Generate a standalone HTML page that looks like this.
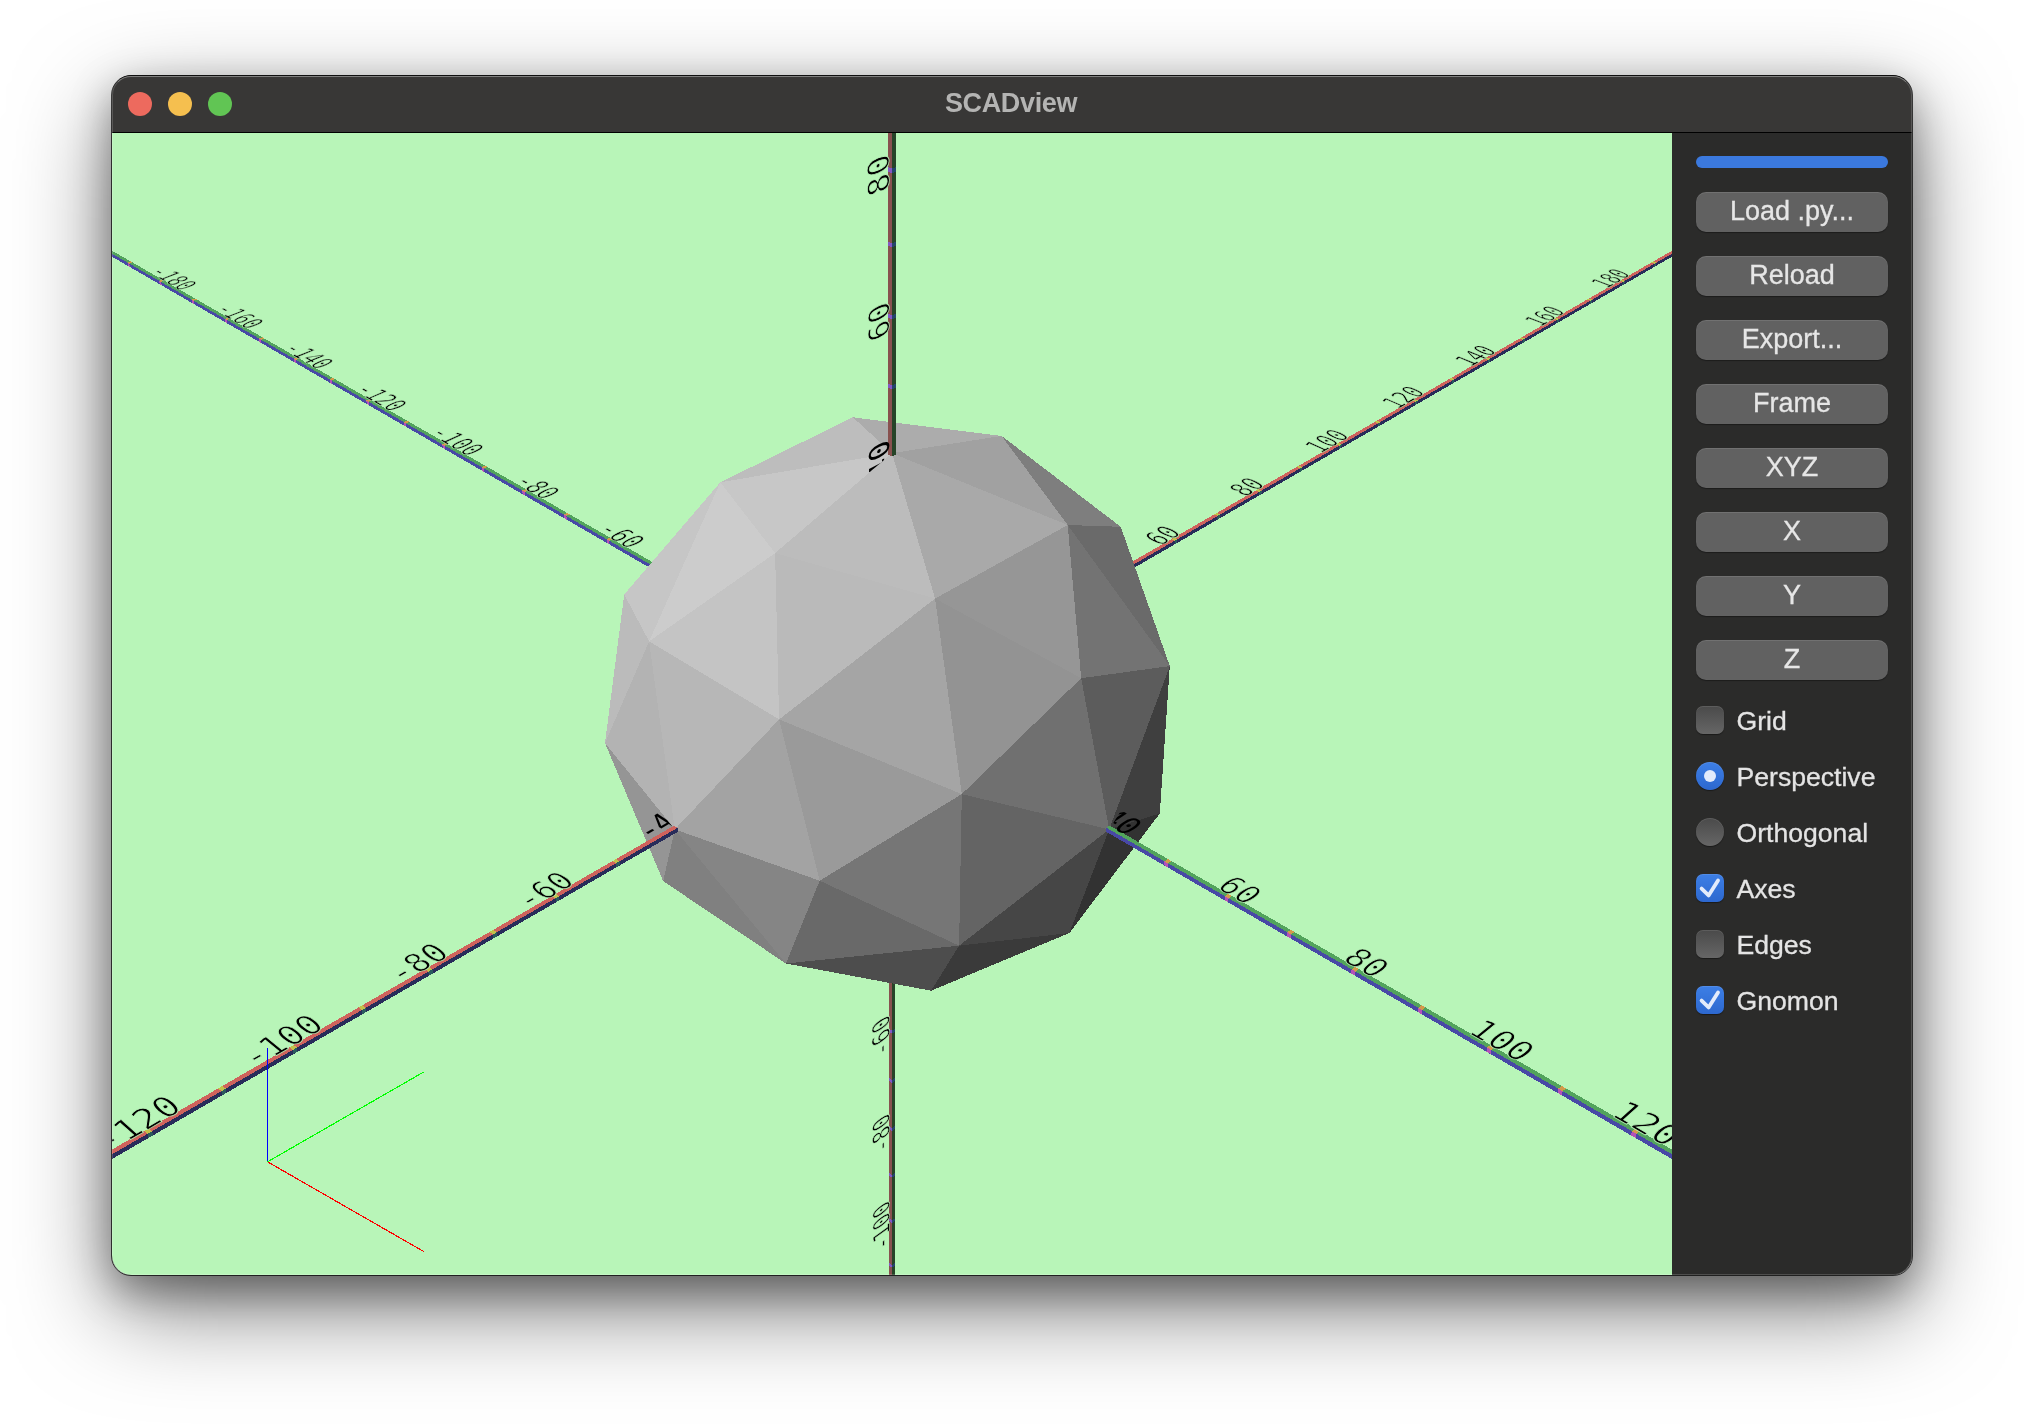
<!DOCTYPE html>
<html lang="en">
<head>
<meta charset="utf-8">
<title>SCADview</title>
<style>
html,body{margin:0;padding:0;background:#fff;}
body{width:2024px;height:1424px;position:relative;overflow:hidden;font-family:"Liberation Sans",sans-serif;}
.shadow{position:absolute;left:112px;top:75px;width:1800px;height:1200px;border-radius:20px;
  box-shadow:0 34px 96px 0 rgba(0,0,0,0.50),0 16px 40px 0 rgba(0,0,0,0.36);}
.win{position:absolute;left:112px;top:75px;width:1800px;height:1200px;border-radius:20px;overflow:hidden;background:#2b2b2a;}
.edge{position:absolute;left:111px;top:75px;width:1800px;height:1199px;border-radius:20px;border:1px solid rgba(0,0,0,0.72);pointer-events:none;}
.hl{position:absolute;left:112px;top:76px;width:1798px;height:1197px;border-radius:19px;border:1px solid rgba(255,255,255,0.17);border-top-color:rgba(255,255,255,0.36);pointer-events:none;}
.titlebar{position:absolute;left:0;top:0;width:1800px;height:57px;background:#383736;}
.tsep{position:absolute;left:0;top:57px;width:1800px;height:1px;background:#000;}
.title{will-change:transform;position:absolute;left:-1.5px;top:0;width:1800px;height:57px;line-height:56px;text-align:center;color:#b4b4b3;font-weight:bold;font-size:27px;letter-spacing:-0.35px;}
.tl{position:absolute;top:17px;width:24px;height:24px;border-radius:50%;}
.gl{position:absolute;left:0;top:58px;display:block;will-change:transform;}
.lab text{font-family:"DejaVu Sans Mono","Liberation Mono",monospace;font-size:100px;fill:#000;}
.lab.thin text{stroke:#b8f5b8;stroke-width:2.4px;paint-order:fill stroke;}
.side{will-change:transform;position:absolute;left:1560px;top:58px;width:240px;height:1142px;background:#2b2b2a;}
.prog{position:absolute;left:24px;top:23px;width:192px;height:12px;border-radius:6px;background:#3b79de;}
.btn{position:absolute;left:24px;width:192px;height:40px;border-radius:10px;background:#616161;color:#e6e6e6;-webkit-text-stroke:0.3px #e6e6e6;font-size:27px;line-height:38px;text-align:center;
  box-shadow:0 1px 1px rgba(0,0,0,0.35), inset 0 1px 0 rgba(255,255,255,0.10);}
.opt{position:absolute;left:24px;height:28px;color:#e4e4e4;-webkit-text-stroke:0.3px #e4e4e4;font-size:26.6px;line-height:28px;white-space:nowrap;}
.opt span{position:absolute;left:40.5px;top:1px;}
.cb{position:absolute;left:0;top:0;width:28px;height:28px;border-radius:7px;background:linear-gradient(#4a4a4a,#666);box-shadow:0 1px 1px rgba(0,0,0,0.4), inset 0 1px 0 rgba(255,255,255,0.10);}
.cb.on{background:linear-gradient(#3d7fe6,#2d68cf);}
.rb{position:absolute;left:0;top:0;width:28px;height:28px;border-radius:50%;background:linear-gradient(#4a4a4a,#666);box-shadow:0 1px 1px rgba(0,0,0,0.4), inset 0 1px 0 rgba(255,255,255,0.10);}
.rb.on{background:linear-gradient(#3d7fe6,#2d68cf);}
.rb.on i{position:absolute;left:8px;top:8px;width:12px;height:12px;border-radius:50%;background:#e3ebfb;}
.cb svg{position:absolute;left:0;top:0;}
</style>
</head>
<body>
<div class="shadow"></div>
<div class="win">
  <div class="titlebar"></div>
  <div class="tsep"></div>
  <div class="tl" style="left:16px;background:#ed6a5e"></div>
  <div class="tl" style="left:56px;background:#f5bf4f"></div>
  <div class="tl" style="left:96px;background:#61c554"></div>
  <div class="title">SCADview</div>
<svg class="gl" width="1560" height="1142" viewBox="0 0 1560 1142">
<defs><clipPath id="cxy"><path clip-rule="evenodd" d="M-10,-10H1570V1152H-10Z M516.9,535.1 L493.0,610.1 L562.8,696.4 L707.7,747.7 L848.4,738.4 L997.2,696.4 L1052.7,608.2 L1056.4,533.3 L973.4,459.4 L841.6,420.4 L721.2,427.3 L586.6,459.4Z"/></clipPath><clipPath id="cz"><path clip-rule="evenodd" d="M-10,-10H1570V1152H-10Z M611.4,788.6 L674.4,829.2 L780.0,794.3 L879.6,699.6 L933.8,592.0 L973.4,459.4 L942.6,361.1 L889.6,302.9 L780.0,320.2 L663.1,420.1 L600.8,546.6 L562.8,696.4Z"/></clipPath></defs>
<rect width="1560" height="1142" fill="#b8f5b8"/>
<g shape-rendering="crispEdges"><polygon points="-555.6,-197.7 -556.4,-200.6 778.3,570.0 778.3,573.9" fill="#4848a6"/><polygon points="-556.4,-200.6 -553.5,-201.3 781.7,568.1 778.3,570.0" fill="#52a35c"/><polygon points="781.7,573.9 781.7,570.0 2116.4,-200.6 2115.6,-197.7" fill="#282c5a"/><polygon points="778.3,568.1 781.7,570.0 2116.4,-200.6 2113.5,-201.3" fill="#cf625c"/><polygon points="777.9,2112.0 780.0,2114.1 780.0,573.0 776.6,571.0" fill="#88514f"/><polygon points="780.0,2114.1 782.1,2112.0 783.4,571.0 780.0,573.0" fill="#264428"/><polygon points="538.4,431.5 541.8,429.8 544.5,431.4 541.1,433.1" fill="#d39a4a"/><polygon points="494.6,406.2 497.9,404.6 500.5,406.1 497.2,407.7" fill="#d39a4a"/><polygon points="451.9,381.6 455.2,380.0 457.8,381.4 454.4,383.0" fill="#d39a4a"/><polygon points="410.3,357.6 413.6,356.0 416.1,357.4 412.8,359.0" fill="#d39a4a"/><polygon points="369.8,334.2 373.1,332.6 375.5,334.0 372.2,335.6" fill="#d39a4a"/><polygon points="330.3,311.4 333.6,309.9 336.0,311.2 332.6,312.7" fill="#d39a4a"/><polygon points="291.8,289.1 295.1,287.7 297.4,289.0 294.1,290.5" fill="#d39a4a"/><polygon points="254.3,267.5 257.6,266.1 259.8,267.3 256.5,268.8" fill="#d39a4a"/><polygon points="217.6,246.3 220.9,244.9 223.1,246.2 219.8,247.6" fill="#d39a4a"/><polygon points="181.9,225.7 185.2,224.3 187.3,225.6 184.0,226.9" fill="#d39a4a"/><polygon points="147.0,205.5 150.3,204.2 152.4,205.4 149.1,206.7" fill="#d39a4a"/><polygon points="113.0,185.9 116.2,184.6 118.2,185.8 115.0,187.0" fill="#d39a4a"/><polygon points="79.7,166.7 82.9,165.4 84.9,166.6 81.7,167.8" fill="#d39a4a"/><polygon points="47.2,147.9 50.4,146.7 52.3,147.8 49.1,149.0" fill="#d39a4a"/><polygon points="15.4,129.6 18.6,128.4 20.5,129.5 17.3,130.7" fill="#d39a4a"/><polygon points="-15.6,111.6 -12.4,110.5 -10.6,111.5 -13.8,112.7" fill="#d39a4a"/><polygon points="-46.0,94.1 -42.8,93.0 -41.0,94.0 -44.2,95.2" fill="#d39a4a"/><polygon points="-75.7,77.0 -72.5,75.9 -70.7,76.9 -73.9,78.0" fill="#d39a4a"/><polygon points="-104.7,60.2 -101.6,59.1 -99.8,60.1 -103.0,61.2" fill="#d39a4a"/><polygon points="-133.1,43.8 -130.0,42.7 -128.3,43.7 -131.5,44.8" fill="#d39a4a"/><polygon points="-161.0,27.7 -157.8,26.7 -156.2,27.6 -159.3,28.7" fill="#d39a4a"/><polygon points="-188.2,12.0 -185.1,11.0 -183.4,11.9 -186.6,13.0" fill="#d39a4a"/><polygon points="-214.8,-3.4 -211.7,-4.4 -210.1,-3.5 -213.3,-2.5" fill="#d39a4a"/><polygon points="-240.9,-18.4 -237.9,-19.4 -236.3,-18.5 -239.4,-17.5" fill="#d39a4a"/><polygon points="-266.5,-33.2 -263.4,-34.2 -261.9,-33.3 -265.0,-32.3" fill="#d39a4a"/><polygon points="538.6,435.3 538.4,431.5 541.1,433.1 541.3,436.8" fill="#b552b8"/><polygon points="494.8,409.9 494.6,406.2 497.2,407.7 497.4,411.4" fill="#b552b8"/><polygon points="452.2,385.3 451.9,381.6 454.4,383.0 454.7,386.7" fill="#b552b8"/><polygon points="410.6,361.2 410.3,357.6 412.8,359.0 413.1,362.7" fill="#b552b8"/><polygon points="370.1,337.8 369.8,334.2 372.2,335.6 372.5,339.2" fill="#b552b8"/><polygon points="330.7,315.0 330.3,311.4 332.6,312.7 333.0,316.3" fill="#b552b8"/><polygon points="292.2,292.7 291.8,289.1 294.1,290.5 294.5,294.1" fill="#b552b8"/><polygon points="254.7,271.0 254.3,267.5 256.5,268.8 256.9,272.3" fill="#b552b8"/><polygon points="218.1,249.9 217.6,246.3 219.8,247.6 220.3,251.1" fill="#b552b8"/><polygon points="182.4,229.2 181.9,225.7 184.0,226.9 184.5,230.4" fill="#b552b8"/><polygon points="147.5,209.0 147.0,205.5 149.1,206.7 149.6,210.2" fill="#b552b8"/><polygon points="113.5,189.3 113.0,185.9 115.0,187.0 115.5,190.5" fill="#b552b8"/><polygon points="80.2,170.1 79.7,166.7 81.7,167.8 82.2,171.2" fill="#b552b8"/><polygon points="47.7,151.3 47.2,147.9 49.1,149.0 49.7,152.4" fill="#b552b8"/><polygon points="16.0,133.0 15.4,129.6 17.3,130.7 17.9,134.0" fill="#b552b8"/><polygon points="-15.0,115.0 -15.6,111.6 -13.8,112.7 -13.2,116.1" fill="#b552b8"/><polygon points="-45.4,97.4 -46.0,94.1 -44.2,95.2 -43.6,98.5" fill="#b552b8"/><polygon points="-75.1,80.3 -75.7,77.0 -73.9,78.0 -73.3,81.3" fill="#b552b8"/><polygon points="-104.1,63.5 -104.7,60.2 -103.0,61.2 -102.4,64.5" fill="#b552b8"/><polygon points="-132.5,47.1 -133.1,43.8 -131.5,44.8 -130.8,48.0" fill="#b552b8"/><polygon points="-160.3,31.0 -161.0,27.7 -159.3,28.7 -158.6,31.9" fill="#b552b8"/><polygon points="-187.5,15.2 -188.2,12.0 -186.6,13.0 -185.9,16.2" fill="#b552b8"/><polygon points="-214.2,-0.2 -214.8,-3.4 -213.3,-2.5 -212.6,0.7" fill="#b552b8"/><polygon points="-240.3,-15.3 -240.9,-18.4 -239.4,-17.5 -238.7,-14.4" fill="#b552b8"/><polygon points="-265.8,-30.1 -266.5,-33.2 -265.0,-32.3 -264.3,-29.2" fill="#b552b8"/><polygon points="1015.5,431.4 1018.9,433.1 1021.6,431.5 1018.2,429.8" fill="#c4c04a"/><polygon points="1059.5,406.1 1062.8,407.7 1065.4,406.2 1062.1,404.6" fill="#c4c04a"/><polygon points="1102.2,381.4 1105.6,383.0 1108.1,381.6 1104.8,380.0" fill="#c4c04a"/><polygon points="1143.9,357.4 1147.2,359.0 1149.7,357.6 1146.4,356.0" fill="#c4c04a"/><polygon points="1184.5,334.0 1187.8,335.6 1190.2,334.2 1186.9,332.6" fill="#c4c04a"/><polygon points="1224.0,311.2 1227.4,312.7 1229.7,311.4 1226.4,309.9" fill="#c4c04a"/><polygon points="1262.6,289.0 1265.9,290.5 1268.2,289.1 1264.9,287.7" fill="#c4c04a"/><polygon points="1300.2,267.3 1303.5,268.8 1305.7,267.5 1302.4,266.1" fill="#c4c04a"/><polygon points="1336.9,246.2 1340.2,247.6 1342.4,246.3 1339.1,244.9" fill="#c4c04a"/><polygon points="1372.7,225.6 1376.0,226.9 1378.1,225.7 1374.8,224.3" fill="#c4c04a"/><polygon points="1407.6,205.4 1410.9,206.7 1413.0,205.5 1409.7,204.2" fill="#c4c04a"/><polygon points="1441.8,185.8 1445.0,187.0 1447.0,185.9 1443.8,184.6" fill="#c4c04a"/><polygon points="1475.1,166.6 1478.3,167.8 1480.3,166.7 1477.1,165.4" fill="#c4c04a"/><polygon points="1507.7,147.8 1510.9,149.0 1512.8,147.9 1509.6,146.7" fill="#c4c04a"/><polygon points="1539.5,129.5 1542.7,130.7 1544.6,129.6 1541.4,128.4" fill="#c4c04a"/><polygon points="1570.6,111.5 1573.8,112.7 1575.6,111.6 1572.4,110.5" fill="#c4c04a"/><polygon points="1601.0,94.0 1604.2,95.2 1606.0,94.1 1602.8,93.0" fill="#c4c04a"/><polygon points="1630.7,76.9 1633.9,78.0 1635.7,77.0 1632.5,75.9" fill="#c4c04a"/><polygon points="1659.8,60.1 1663.0,61.2 1664.7,60.2 1661.6,59.1" fill="#c4c04a"/><polygon points="1688.3,43.7 1691.5,44.8 1693.1,43.8 1690.0,42.7" fill="#c4c04a"/><polygon points="1716.2,27.6 1719.3,28.7 1721.0,27.7 1717.8,26.7" fill="#c4c04a"/><polygon points="1743.4,11.9 1746.6,13.0 1748.2,12.0 1745.1,11.0" fill="#c4c04a"/><polygon points="1770.1,-3.5 1773.3,-2.5 1774.8,-3.4 1771.7,-4.4" fill="#c4c04a"/><polygon points="1796.3,-18.5 1799.4,-17.5 1800.9,-18.4 1797.9,-19.4" fill="#c4c04a"/><polygon points="1821.9,-33.3 1825.0,-32.3 1826.5,-33.2 1823.4,-34.2" fill="#c4c04a"/><polygon points="1018.7,436.8 1018.9,433.1 1021.6,431.5 1021.4,435.3" fill="#2a5a5e"/><polygon points="1062.6,411.4 1062.8,407.7 1065.4,406.2 1065.2,409.9" fill="#2a5a5e"/><polygon points="1105.3,386.7 1105.6,383.0 1108.1,381.6 1107.8,385.3" fill="#2a5a5e"/><polygon points="1146.9,362.7 1147.2,359.0 1149.7,357.6 1149.4,361.2" fill="#2a5a5e"/><polygon points="1187.5,339.2 1187.8,335.6 1190.2,334.2 1189.9,337.8" fill="#2a5a5e"/><polygon points="1227.0,316.3 1227.4,312.7 1229.7,311.4 1229.3,315.0" fill="#2a5a5e"/><polygon points="1265.5,294.1 1265.9,290.5 1268.2,289.1 1267.8,292.7" fill="#2a5a5e"/><polygon points="1303.1,272.3 1303.5,268.8 1305.7,267.5 1305.3,271.0" fill="#2a5a5e"/><polygon points="1339.7,251.1 1340.2,247.6 1342.4,246.3 1341.9,249.9" fill="#2a5a5e"/><polygon points="1375.5,230.4 1376.0,226.9 1378.1,225.7 1377.6,229.2" fill="#2a5a5e"/><polygon points="1410.4,210.2 1410.9,206.7 1413.0,205.5 1412.5,209.0" fill="#2a5a5e"/><polygon points="1444.5,190.5 1445.0,187.0 1447.0,185.9 1446.5,189.3" fill="#2a5a5e"/><polygon points="1477.8,171.2 1478.3,167.8 1480.3,166.7 1479.8,170.1" fill="#2a5a5e"/><polygon points="1510.3,152.4 1510.9,149.0 1512.8,147.9 1512.3,151.3" fill="#2a5a5e"/><polygon points="1542.1,134.0 1542.7,130.7 1544.6,129.6 1544.0,133.0" fill="#2a5a5e"/><polygon points="1573.2,116.1 1573.8,112.7 1575.6,111.6 1575.0,115.0" fill="#2a5a5e"/><polygon points="1603.6,98.5 1604.2,95.2 1606.0,94.1 1605.4,97.4" fill="#2a5a5e"/><polygon points="1633.3,81.3 1633.9,78.0 1635.7,77.0 1635.1,80.3" fill="#2a5a5e"/><polygon points="1662.4,64.5 1663.0,61.2 1664.7,60.2 1664.1,63.5" fill="#2a5a5e"/><polygon points="1690.8,48.0 1691.5,44.8 1693.1,43.8 1692.5,47.1" fill="#2a5a5e"/><polygon points="1718.6,31.9 1719.3,28.7 1721.0,27.7 1720.3,31.0" fill="#2a5a5e"/><polygon points="1745.9,16.2 1746.6,13.0 1748.2,12.0 1747.5,15.2" fill="#2a5a5e"/><polygon points="1772.6,0.7 1773.3,-2.5 1774.8,-3.4 1774.2,-0.2" fill="#2a5a5e"/><polygon points="1798.7,-14.4 1799.4,-17.5 1800.9,-18.4 1800.3,-15.3" fill="#2a5a5e"/><polygon points="1824.3,-29.2 1825.0,-32.3 1826.5,-33.2 1825.8,-30.1" fill="#2a5a5e"/><polygon points="776.9,847.9 780.0,849.9 780.0,846.9 776.9,844.8" fill="#8556c4"/><polygon points="776.9,898.5 780.0,900.6 780.0,897.6 776.9,895.5" fill="#8556c4"/><polygon points="776.9,947.8 780.0,949.9 780.0,947.0 776.9,944.9" fill="#8556c4"/><polygon points="777.0,995.8 780.0,997.9 780.0,995.0 777.0,992.9" fill="#8556c4"/><polygon points="777.0,1042.5 780.0,1044.7 780.0,1041.9 777.0,1039.8" fill="#8556c4"/><polygon points="777.1,1088.1 780.0,1090.3 780.0,1087.6 777.1,1085.4" fill="#8556c4"/><polygon points="777.1,1132.6 780.0,1134.7 780.0,1132.1 777.1,1129.9" fill="#8556c4"/><polygon points="777.1,1175.9 780.0,1178.1 780.0,1175.5 777.1,1173.3" fill="#8556c4"/><polygon points="777.2,1218.2 780.0,1220.3 780.0,1217.8 777.2,1215.7" fill="#8556c4"/><polygon points="777.2,1259.4 780.0,1261.6 780.0,1259.2 777.2,1257.0" fill="#8556c4"/><polygon points="777.2,1299.7 780.0,1301.9 780.0,1299.5 777.2,1297.3" fill="#8556c4"/><polygon points="777.3,1339.1 780.0,1341.2 780.0,1338.9 777.3,1336.7" fill="#8556c4"/><polygon points="777.3,1377.5 780.0,1379.7 780.0,1377.4 777.3,1375.2" fill="#8556c4"/><polygon points="777.3,1415.0 780.0,1417.2 780.0,1415.0 777.3,1412.8" fill="#8556c4"/><polygon points="777.4,1451.7 780.0,1453.9 780.0,1451.7 777.4,1449.5" fill="#8556c4"/><polygon points="777.4,1487.5 780.0,1489.7 780.0,1487.6 777.4,1485.4" fill="#8556c4"/><polygon points="777.4,1522.6 780.0,1524.8 780.0,1522.7 777.4,1520.5" fill="#8556c4"/><polygon points="777.4,1556.9 780.0,1559.1 780.0,1557.0 777.4,1554.8" fill="#8556c4"/><polygon points="777.5,1590.4 780.0,1592.6 780.0,1590.6 777.5,1588.4" fill="#8556c4"/><polygon points="777.5,1623.2 780.0,1625.4 780.0,1623.5 777.5,1621.3" fill="#8556c4"/><polygon points="777.5,1655.3 780.0,1657.5 780.0,1655.6 777.5,1653.4" fill="#8556c4"/><polygon points="777.5,1686.8 780.0,1689.0 780.0,1687.1 777.5,1684.9" fill="#8556c4"/><polygon points="777.6,1717.6 780.0,1719.7 780.0,1717.9 777.6,1715.7" fill="#8556c4"/><polygon points="777.6,1747.7 780.0,1749.9 780.0,1748.1 777.6,1745.9" fill="#8556c4"/><polygon points="777.6,1777.2 780.0,1779.4 780.0,1777.7 777.6,1775.5" fill="#8556c4"/><polygon points="780.0,849.9 783.1,847.9 783.1,844.8 780.0,846.9" fill="#24466a"/><polygon points="780.0,900.6 783.1,898.5 783.1,895.5 780.0,897.6" fill="#24466a"/><polygon points="780.0,949.9 783.1,947.8 783.1,944.9 780.0,947.0" fill="#24466a"/><polygon points="780.0,997.9 783.0,995.8 783.0,992.9 780.0,995.0" fill="#24466a"/><polygon points="780.0,1044.7 783.0,1042.5 783.0,1039.8 780.0,1041.9" fill="#24466a"/><polygon points="780.0,1090.3 782.9,1088.1 782.9,1085.4 780.0,1087.6" fill="#24466a"/><polygon points="780.0,1134.7 782.9,1132.6 782.9,1129.9 780.0,1132.1" fill="#24466a"/><polygon points="780.0,1178.1 782.9,1175.9 782.9,1173.3 780.0,1175.5" fill="#24466a"/><polygon points="780.0,1220.3 782.8,1218.2 782.8,1215.7 780.0,1217.8" fill="#24466a"/><polygon points="780.0,1261.6 782.8,1259.4 782.8,1257.0 780.0,1259.2" fill="#24466a"/><polygon points="780.0,1301.9 782.8,1299.7 782.8,1297.3 780.0,1299.5" fill="#24466a"/><polygon points="780.0,1341.2 782.7,1339.1 782.7,1336.7 780.0,1338.9" fill="#24466a"/><polygon points="780.0,1379.7 782.7,1377.5 782.7,1375.2 780.0,1377.4" fill="#24466a"/><polygon points="780.0,1417.2 782.7,1415.0 782.7,1412.8 780.0,1415.0" fill="#24466a"/><polygon points="780.0,1453.9 782.6,1451.7 782.6,1449.5 780.0,1451.7" fill="#24466a"/><polygon points="780.0,1489.7 782.6,1487.5 782.6,1485.4 780.0,1487.6" fill="#24466a"/><polygon points="780.0,1524.8 782.6,1522.6 782.6,1520.5 780.0,1522.7" fill="#24466a"/><polygon points="780.0,1559.1 782.6,1556.9 782.6,1554.8 780.0,1557.0" fill="#24466a"/><polygon points="780.0,1592.6 782.5,1590.4 782.5,1588.4 780.0,1590.6" fill="#24466a"/><polygon points="780.0,1625.4 782.5,1623.2 782.5,1621.3 780.0,1623.5" fill="#24466a"/><polygon points="780.0,1657.5 782.5,1655.3 782.5,1653.4 780.0,1655.6" fill="#24466a"/><polygon points="780.0,1689.0 782.5,1686.8 782.5,1684.9 780.0,1687.1" fill="#24466a"/><polygon points="780.0,1719.7 782.4,1717.6 782.4,1715.7 780.0,1717.9" fill="#24466a"/><polygon points="780.0,1749.9 782.4,1747.7 782.4,1745.9 780.0,1748.1" fill="#24466a"/><polygon points="780.0,1779.4 782.4,1777.2 782.4,1775.5 780.0,1777.7" fill="#24466a"/></g>
<g class="lab thin"><text transform="matrix(0.13683 0.07847 -0.24347 0.09231 36.37 139.14)">-180</text><text transform="matrix(0.14334 0.08220 -0.24532 0.09670 101.43 176.64)">-160</text><text transform="matrix(0.15032 0.08620 -0.24706 0.10141 169.61 215.94)">-140</text><text transform="matrix(0.15783 0.09051 -0.24869 0.10647 241.14 257.18)">-120</text><text transform="matrix(0.16591 0.09514 -0.25016 0.11193 316.27 300.49)">-100</text><text transform="matrix(0.17463 0.10014 -0.25146 0.11781 400.48 349.01)">-80</text><text transform="matrix(0.18405 0.10554 -0.25254 0.12417 483.96 397.14)">-60</text><text transform="matrix(0.18405 -0.10554 0.25254 0.12417 1048.39 412.99)">60</text><text transform="matrix(0.17463 -0.10014 0.25146 0.11781 1133.29 364.06)">80</text><text transform="matrix(0.16591 -0.09514 0.25016 0.11193 1208.83 320.50)">100</text><text transform="matrix(0.15783 -0.09050 0.24869 0.10647 1285.66 276.22)">120</text><text transform="matrix(0.15032 -0.08620 0.24706 0.10141 1358.77 234.08)">140</text><text transform="matrix(0.14334 -0.08220 0.24532 0.09670 1428.42 193.93)">160</text><text transform="matrix(0.13683 -0.07846 0.24347 0.09231 1494.84 155.64)">180</text><text transform="matrix(-0.00047 -0.15783 0.20387 -0.16648 777.84 1434.59)">-180</text><text transform="matrix(-0.00049 -0.16538 0.20870 -0.16593 777.79 1359.49)">-160</text><text transform="matrix(-0.00052 -0.17348 0.21377 -0.16512 777.74 1280.78)">-140</text><text transform="matrix(-0.00054 -0.18219 0.21908 -0.16403 777.68 1198.20)">-120</text><text transform="matrix(-0.00057 -0.19158 0.22467 -0.16261 777.63 1111.45)">-100</text><text transform="matrix(-0.00060 -0.20170 0.23056 -0.16082 777.55 1014.22)">-80</text><text transform="matrix(-0.00063 -0.21266 0.23675 -0.15860 777.49 917.82)">-60</text></g>
<g shape-rendering="crispEdges"><polygon points="1008.8,393.8 889.6,302.9 955.7,392.0" fill="#7e7e7e"/><polygon points="1057.8,533.1 955.7,392.0 969.2,545.2" fill="#737373"/><polygon points="1008.8,393.8 955.7,392.0 1057.8,533.1" fill="#6a6a6a"/><polygon points="889.6,302.9 740.9,284.3 780.0,320.2" fill="#acacac"/><polygon points="780.0,320.2 608.3,349.3 663.1,420.1" fill="#c7c7c7"/><polygon points="740.9,284.3 608.3,349.3 780.0,320.2" fill="#bdbdbd"/><polygon points="707.7,747.7 849.8,661.1 667.1,586.4" fill="#9a9a9a"/><polygon points="849.8,661.1 969.2,545.2 823.1,465.5" fill="#939393"/><polygon points="667.1,586.4 823.1,465.5 663.1,420.1" fill="#bababa"/><polygon points="849.8,661.1 823.1,465.5 667.1,586.4" fill="#a5a5a5"/><polygon points="707.7,747.7 667.1,586.4 562.8,696.4" fill="#a3a3a3"/><polygon points="667.1,586.4 663.1,420.1 537.1,508.3" fill="#c4c4c4"/><polygon points="562.8,696.4 537.1,508.3 493.0,610.1" fill="#b3b3b3"/><polygon points="667.1,586.4 537.1,508.3 562.8,696.4" fill="#b7b7b7"/><polygon points="707.7,747.7 562.8,696.4 673.9,830.5" fill="#858585"/><polygon points="562.8,696.4 493.0,610.1 551.2,748.2" fill="#959595"/><polygon points="562.8,696.4 551.2,748.2 673.9,830.5" fill="#808080"/><polygon points="707.7,747.7 673.9,830.5 847.1,812.7" fill="#696969"/><polygon points="847.1,812.7 819.1,857.7 957.4,800.0" fill="#3a3a3a"/><polygon points="673.9,830.5 819.1,857.7 847.1,812.7" fill="#4d4d4d"/><polygon points="707.7,747.7 847.1,812.7 849.8,661.1" fill="#767676"/><polygon points="847.1,812.7 957.4,800.0 997.2,696.4" fill="#464646"/><polygon points="849.8,661.1 997.2,696.4 969.2,545.2" fill="#707070"/><polygon points="847.1,812.7 997.2,696.4 849.8,661.1" fill="#646464"/><polygon points="663.1,420.1 823.1,465.5 780.0,320.2" fill="#bcbcbc"/><polygon points="823.1,465.5 969.2,545.2 955.7,392.0" fill="#969696"/><polygon points="780.0,320.2 955.7,392.0 889.6,302.9" fill="#a1a1a1"/><polygon points="823.1,465.5 955.7,392.0 780.0,320.2" fill="#a9a9a9"/><polygon points="493.0,610.1 537.1,508.3 512.2,461.5" fill="#bbbbbb"/><polygon points="537.1,508.3 663.1,420.1 608.3,349.3" fill="#cccccc"/><polygon points="537.1,508.3 608.3,349.3 512.2,461.5" fill="#c6c6c6"/><polygon points="969.2,545.2 997.2,696.4 1057.8,533.1" fill="#5c5c5c"/><polygon points="997.2,696.4 957.4,800.0 1047.8,680.5" fill="#323232"/><polygon points="997.2,696.4 1047.8,680.5 1057.8,533.1" fill="#3f3f3f"/></g>
<g shape-rendering="crispEdges"><polygon points="994.3,698.9 994.5,694.8 1979.4,1263.5 1977.9,1267.8" fill="#4848a6"/><polygon points="994.5,694.8 997.9,692.6 1982.4,1260.0 1979.4,1263.5" fill="#52a35c"/><polygon points="-417.9,1267.8 -419.4,1263.5 565.5,694.8 565.7,698.9" fill="#282c5a"/><polygon points="-422.4,1260.0 -419.4,1263.5 565.5,694.8 562.1,692.6" fill="#cf625c"/><polygon points="776.4,321.5 780.0,323.3 780.0,-814.0 775.5,-814.8" fill="#88514f"/><polygon points="780.0,323.3 783.6,321.5 784.5,-814.8 780.0,-814.0" fill="#264428"/><polygon points="1052.5,728.3 1055.8,726.0 1059.4,728.1 1056.0,730.4" fill="#d39a4a"/><polygon points="1112.9,763.2 1116.2,760.8 1119.9,763.0 1116.6,765.3" fill="#d39a4a"/><polygon points="1175.2,799.2 1178.6,796.8 1182.4,799.0 1179.0,801.4" fill="#d39a4a"/><polygon points="1239.6,836.4 1243.0,833.9 1246.9,836.1 1243.6,838.6" fill="#d39a4a"/><polygon points="1306.2,874.8 1309.5,872.2 1313.6,874.6 1310.3,877.1" fill="#d39a4a"/><polygon points="1375.0,914.5 1378.3,911.9 1382.5,914.3 1379.2,917.0" fill="#d39a4a"/><polygon points="1446.2,955.6 1449.5,952.9 1453.8,955.4 1450.6,958.2" fill="#d39a4a"/><polygon points="1519.9,998.2 1523.2,995.3 1527.7,997.9 1524.4,1000.8" fill="#d39a4a"/><polygon points="1596.3,1042.3 1599.5,1039.3 1604.1,1042.0 1601.0,1045.0" fill="#d39a4a"/><polygon points="1675.4,1088.0 1678.6,1084.9 1683.4,1087.7 1680.3,1090.8" fill="#d39a4a"/><polygon points="1757.5,1135.4 1760.6,1132.2 1765.6,1135.1 1762.5,1138.3" fill="#d39a4a"/><polygon points="1842.7,1184.5 1845.8,1181.2 1851.0,1184.2 1847.9,1187.5" fill="#d39a4a"/><polygon points="1052.2,732.3 1052.5,728.3 1056.0,730.4 1055.8,734.4" fill="#b552b8"/><polygon points="1112.5,767.3 1112.9,763.2 1116.6,765.3 1116.2,769.4" fill="#b552b8"/><polygon points="1174.8,803.3 1175.2,799.2 1179.0,801.4 1178.6,805.5" fill="#b552b8"/><polygon points="1239.1,840.5 1239.6,836.4 1243.6,838.6 1243.1,842.8" fill="#b552b8"/><polygon points="1305.6,878.9 1306.2,874.8 1310.3,877.1 1309.7,881.3" fill="#b552b8"/><polygon points="1374.4,918.7 1375.0,914.5 1379.2,917.0 1378.6,921.1" fill="#b552b8"/><polygon points="1445.5,959.8 1446.2,955.6 1450.6,958.2 1449.8,962.4" fill="#b552b8"/><polygon points="1519.1,1002.4 1519.9,998.2 1524.4,1000.8 1523.6,1005.0" fill="#b552b8"/><polygon points="1595.3,1046.5 1596.3,1042.3 1601.0,1045.0 1600.0,1049.2" fill="#b552b8"/><polygon points="1674.3,1092.2 1675.4,1088.0 1680.3,1090.8 1679.2,1095.0" fill="#b552b8"/><polygon points="1756.3,1139.6 1757.5,1135.4 1762.5,1138.3 1761.3,1142.5" fill="#b552b8"/><polygon points="1841.4,1188.8 1842.7,1184.5 1847.9,1187.5 1846.6,1191.9" fill="#b552b8"/><polygon points="500.6,728.1 504.0,730.4 507.5,728.3 504.2,726.0" fill="#c4c04a"/><polygon points="440.1,763.0 443.4,765.3 447.1,763.2 443.8,760.8" fill="#c4c04a"/><polygon points="377.6,799.0 381.0,801.4 384.8,799.2 381.4,796.8" fill="#c4c04a"/><polygon points="313.1,836.1 316.4,838.6 320.4,836.4 317.0,833.9" fill="#c4c04a"/><polygon points="246.4,874.6 249.7,877.1 253.8,874.8 250.5,872.2" fill="#c4c04a"/><polygon points="177.5,914.3 180.8,917.0 185.0,914.5 181.7,911.9" fill="#c4c04a"/><polygon points="106.2,955.4 109.4,958.2 113.8,955.6 110.5,952.9" fill="#c4c04a"/><polygon points="32.3,997.9 35.6,1000.8 40.1,998.2 36.8,995.3" fill="#c4c04a"/><polygon points="-44.1,1042.0 -41.0,1045.0 -36.3,1042.3 -39.5,1039.3" fill="#c4c04a"/><polygon points="-123.4,1087.7 -120.3,1090.8 -115.4,1088.0 -118.6,1084.9" fill="#c4c04a"/><polygon points="-205.6,1135.1 -202.5,1138.3 -197.5,1135.4 -200.6,1132.2" fill="#c4c04a"/><polygon points="-291.0,1184.2 -287.9,1187.5 -282.7,1184.5 -285.8,1181.2" fill="#c4c04a"/><polygon points="504.2,734.4 504.0,730.4 507.5,728.3 507.8,732.3" fill="#2a5a5e"/><polygon points="443.8,769.4 443.4,765.3 447.1,763.2 447.5,767.3" fill="#2a5a5e"/><polygon points="381.4,805.5 381.0,801.4 384.8,799.2 385.2,803.3" fill="#2a5a5e"/><polygon points="316.9,842.8 316.4,838.6 320.4,836.4 320.9,840.5" fill="#2a5a5e"/><polygon points="250.3,881.3 249.7,877.1 253.8,874.8 254.4,878.9" fill="#2a5a5e"/><polygon points="181.4,921.1 180.8,917.0 185.0,914.5 185.6,918.7" fill="#2a5a5e"/><polygon points="110.2,962.4 109.4,958.2 113.8,955.6 114.5,959.8" fill="#2a5a5e"/><polygon points="36.4,1005.0 35.6,1000.8 40.1,998.2 40.9,1002.4" fill="#2a5a5e"/><polygon points="-40.0,1049.2 -41.0,1045.0 -36.3,1042.3 -35.3,1046.5" fill="#2a5a5e"/><polygon points="-119.2,1095.0 -120.3,1090.8 -115.4,1088.0 -114.3,1092.2" fill="#2a5a5e"/><polygon points="-201.3,1142.5 -202.5,1138.3 -197.5,1135.4 -196.3,1139.6" fill="#2a5a5e"/><polygon points="-286.6,1191.9 -287.9,1187.5 -282.7,1184.5 -281.4,1188.8" fill="#2a5a5e"/><polygon points="776.4,254.6 780.0,256.4 780.0,252.3 776.4,250.5" fill="#8556c4"/><polygon points="776.3,184.9 780.0,186.6 780.0,182.4 776.3,180.6" fill="#8556c4"/><polygon points="776.2,112.9 780.0,114.6 780.0,110.2 776.2,108.6" fill="#8556c4"/><polygon points="776.2,38.6 780.0,40.3 780.0,35.7 776.2,34.1" fill="#8556c4"/><polygon points="776.1,-38.2 780.0,-36.6 780.0,-41.3 776.1,-42.9" fill="#8556c4"/><polygon points="776.1,-117.6 780.0,-116.1 780.0,-120.9 776.0,-122.4" fill="#8556c4"/><polygon points="776.0,-199.7 780.0,-198.3 780.0,-203.3 776.0,-204.8" fill="#8556c4"/><polygon points="775.9,-284.8 780.0,-283.4 780.0,-288.6 775.9,-290.0" fill="#8556c4"/><polygon points="775.8,-372.9 780.0,-371.6 780.0,-377.0 775.8,-378.2" fill="#8556c4"/><polygon points="775.8,-464.1 780.0,-462.9 780.0,-468.5 775.8,-469.7" fill="#8556c4"/><polygon points="775.7,-558.8 780.0,-557.7 780.0,-563.5 775.7,-564.6" fill="#8556c4"/><polygon points="775.6,-657.1 780.0,-656.1 780.0,-662.1 775.6,-663.1" fill="#8556c4"/><polygon points="780.0,256.4 783.6,254.6 783.6,250.5 780.0,252.3" fill="#24466a"/><polygon points="780.0,186.6 783.7,184.9 783.7,180.6 780.0,182.4" fill="#24466a"/><polygon points="780.0,114.6 783.8,112.9 783.8,108.6 780.0,110.2" fill="#24466a"/><polygon points="780.0,40.3 783.8,38.6 783.8,34.1 780.0,35.7" fill="#24466a"/><polygon points="780.0,-36.6 783.9,-38.2 783.9,-42.9 780.0,-41.3" fill="#24466a"/><polygon points="780.0,-116.1 783.9,-117.6 784.0,-122.4 780.0,-120.9" fill="#24466a"/><polygon points="780.0,-198.3 784.0,-199.7 784.0,-204.8 780.0,-203.3" fill="#24466a"/><polygon points="780.0,-283.4 784.1,-284.8 784.1,-290.0 780.0,-288.6" fill="#24466a"/><polygon points="780.0,-371.6 784.2,-372.9 784.2,-378.2 780.0,-377.0" fill="#24466a"/><polygon points="780.0,-462.9 784.2,-464.1 784.2,-469.7 780.0,-468.5" fill="#24466a"/><polygon points="780.0,-557.7 784.3,-558.8 784.3,-564.6 780.0,-563.5" fill="#24466a"/><polygon points="780.0,-656.1 784.4,-657.1 784.4,-663.1 780.0,-662.1" fill="#24466a"/></g>
<g class="lab thin"><text transform="matrix(0.26071 0.14950 -0.25155 0.17588 1103.39 754.18)">60</text><text transform="matrix(0.27806 0.15945 -0.24942 0.18759 1229.13 826.66)">80</text><text transform="matrix(0.29720 0.17043 -0.24642 0.20050 1354.52 898.97)">100</text><text transform="matrix(0.31839 0.18258 -0.24237 0.21479 1497.53 981.41)">120</text><text transform="matrix(0.34192 0.19607 -0.23708 0.23066 1650.88 1069.80)">140</text><text transform="matrix(0.36816 0.21112 -0.23029 0.24837 1815.73 1164.84)">160</text><text transform="matrix(0.36818 -0.21113 0.23029 0.24837 -333.49 1209.43)">-160</text><text transform="matrix(0.34193 -0.19608 0.23708 0.23066 -163.09 1111.21)">-140</text><text transform="matrix(0.31840 -0.18258 0.24237 0.21479 -4.76 1019.96)">-120</text><text transform="matrix(0.29721 -0.17043 0.24642 0.20050 142.72 934.96)">-100</text><text transform="matrix(0.27806 -0.15945 0.24942 0.18759 288.93 850.71)">-80</text><text transform="matrix(0.26072 -0.14950 0.25155 0.17588 417.29 776.73)">-60</text><text transform="matrix(-0.00090 -0.30195 0.28229 -0.13187 777.00 202.31)">60</text><text transform="matrix(-0.00096 -0.32220 0.29163 -0.12411 776.90 57.02)">80</text><text transform="matrix(-0.00102 -0.34457 0.30162 -0.11498 776.83 -87.85)">100</text><text transform="matrix(-0.00110 -0.36934 0.31232 -0.10422 776.72 -253.12)">120</text><text transform="matrix(-0.00118 -0.39688 0.32380 -0.09154 776.61 -430.36)">140</text><text transform="matrix(-0.00127 -0.42761 0.33616 -0.07660 776.49 -620.93)">160</text></g>
<g class="lab" clip-path="url(#cxy)"><text transform="matrix(0.24494 0.14046 -0.25296 0.16524 985.37 686.15)">40</text><text transform="matrix(0.24494 -0.14046 0.25296 0.16524 537.70 707.33)">-40</text></g>
<g class="lab" clip-path="url(#cz)"><text transform="matrix(-0.00084 -0.28355 0.27352 -0.13844 777.09 338.67)">40</text></g>
<g shape-rendering="crispEdges" fill="none"><line x1="155.8" y1="1028.8" x2="155.8" y2="915.0" stroke="#0000ff" stroke-width="1.3"/><line x1="155.5" y1="1028.8" x2="311.7" y2="939.0" stroke="#00ff00" stroke-width="1.15"/><line x1="155.5" y1="1028.8" x2="311.7" y2="1118.5" stroke="#ff0000" stroke-width="1.15"/></g>
</svg>
  <div class="side">
    <div class="prog"></div>
    <div class="btn" style="top:59px">Load .py...</div>
    <div class="btn" style="top:123px">Reload</div>
    <div class="btn" style="top:187px">Export...</div>
    <div class="btn" style="top:251px">Frame</div>
    <div class="btn" style="top:315px">XYZ</div>
    <div class="btn" style="top:379px">X</div>
    <div class="btn" style="top:443px">Y</div>
    <div class="btn" style="top:507px">Z</div>
    <div class="opt" style="top:573px"><div class="cb"></div><span>Grid</span></div>
    <div class="opt" style="top:629px"><div class="rb on"><i></i></div><span>Perspective</span></div>
    <div class="opt" style="top:685px"><div class="rb"></div><span>Orthogonal</span></div>
    <div class="opt" style="top:741px"><div class="cb on"><svg width="28" height="28" viewBox="0 0 28 28"><path d="M5.6 14.6 L12.6 21.4 L22 6.4" fill="none" stroke="#e3ebfb" stroke-width="3.8" stroke-linecap="round" stroke-linejoin="round"/></svg></div><span>Axes</span></div>
    <div class="opt" style="top:797px"><div class="cb"></div><span>Edges</span></div>
    <div class="opt" style="top:853px"><div class="cb on"><svg width="28" height="28" viewBox="0 0 28 28"><path d="M5.6 14.6 L12.6 21.4 L22 6.4" fill="none" stroke="#e3ebfb" stroke-width="3.8" stroke-linecap="round" stroke-linejoin="round"/></svg></div><span>Gnomon</span></div>
  </div>
</div>
<div class="edge"></div>
<div class="hl"></div>
</body>
</html>
